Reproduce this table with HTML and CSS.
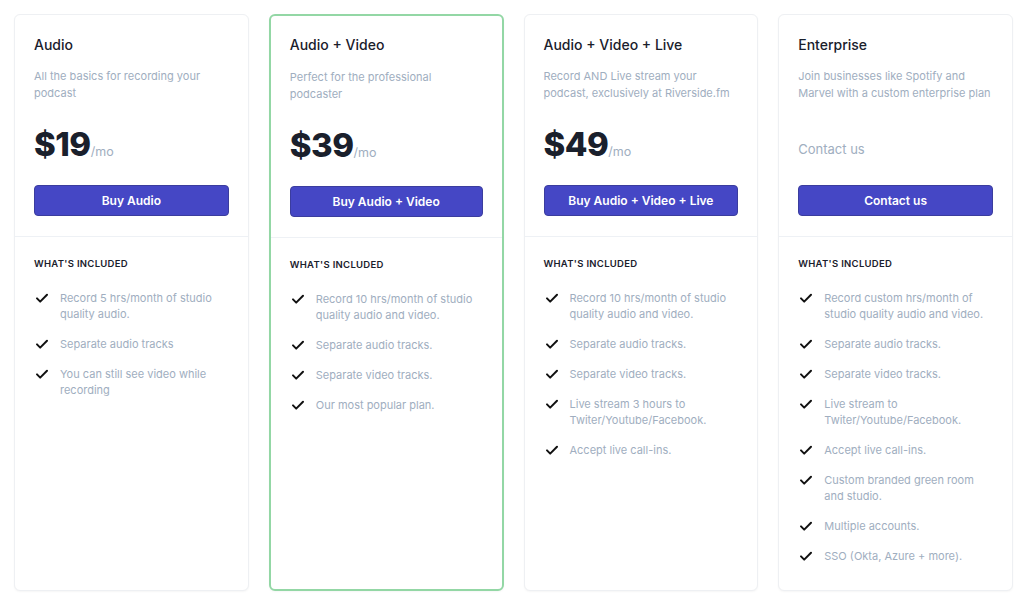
FILE: index.html
```html
<!DOCTYPE html>
<html lang="en">
<head>
    <meta charset="UTF-8">
    <meta name="viewport" content="width=device-width, initial-scale=1.0">
    <title>Pricing</title>
    <link rel="stylesheet" href="styles.css">
</head>
<body>
    <main class="planos">
        <div class="plano">
            <div class="plano-topo">
                <h3>Audio</h3>
                <p class="descricao">All the basics for recording your podcast</p>
                <div class="preco"><span class="valor">$19</span><span class="mes">/mo</span></div>
                <button class="btn-comprar">Buy Audio</button>
            </div>
            <div class="plano-itens">
                <h4>What's included</h4>
                <ul>
                    <li><svg viewBox="0 0 16 16"><path d="M3 8.4l3.2 3.2L13 4.8"/></svg><span>Record 5 hrs/month of studio quality audio.</span></li>
                    <li><svg viewBox="0 0 16 16"><path d="M3 8.4l3.2 3.2L13 4.8"/></svg><span>Separate audio tracks</span></li>
                    <li><svg viewBox="0 0 16 16"><path d="M3 8.4l3.2 3.2L13 4.8"/></svg><span>You can still see video while recording</span></li>
                </ul>
            </div>
        </div>

        <div class="plano destaque">
            <div class="plano-topo">
                <h3>Audio + Video</h3>
                <p class="descricao">Perfect for the professional podcaster</p>
                <div class="preco"><span class="valor">$39</span><span class="mes">/mo</span></div>
                <button class="btn-comprar">Buy Audio + Video</button>
            </div>
            <div class="plano-itens">
                <h4>What's included</h4>
                <ul>
                    <li><svg viewBox="0 0 16 16"><path d="M3 8.4l3.2 3.2L13 4.8"/></svg><span>Record 10 hrs/month of studio quality audio and video.</span></li>
                    <li><svg viewBox="0 0 16 16"><path d="M3 8.4l3.2 3.2L13 4.8"/></svg><span>Separate audio tracks.</span></li>
                    <li><svg viewBox="0 0 16 16"><path d="M3 8.4l3.2 3.2L13 4.8"/></svg><span>Separate video tracks.</span></li>
                    <li><svg viewBox="0 0 16 16"><path d="M3 8.4l3.2 3.2L13 4.8"/></svg><span>Our most popular plan.</span></li>
                </ul>
            </div>
        </div>

        <div class="plano">
            <div class="plano-topo">
                <h3>Audio + Video + Live</h3>
                <p class="descricao">Record AND Live stream your podcast, exclusively at Riverside.fm</p>
                <div class="preco"><span class="valor">$49</span><span class="mes">/mo</span></div>
                <button class="btn-comprar">Buy Audio + Video + Live</button>
            </div>
            <div class="plano-itens">
                <h4>What's included</h4>
                <ul>
                    <li><svg viewBox="0 0 16 16"><path d="M3 8.4l3.2 3.2L13 4.8"/></svg><span>Record 10 hrs/month of studio quality audio and video.</span></li>
                    <li><svg viewBox="0 0 16 16"><path d="M3 8.4l3.2 3.2L13 4.8"/></svg><span>Separate audio tracks.</span></li>
                    <li><svg viewBox="0 0 16 16"><path d="M3 8.4l3.2 3.2L13 4.8"/></svg><span>Separate video tracks.</span></li>
                    <li><svg viewBox="0 0 16 16"><path d="M3 8.4l3.2 3.2L13 4.8"/></svg><span>Live stream 3 hours to Twiter/Youtube/Facebook.</span></li>
                    <li><svg viewBox="0 0 16 16"><path d="M3 8.4l3.2 3.2L13 4.8"/></svg><span>Accept live call-ins.</span></li>
                </ul>
            </div>
        </div>

        <div class="plano">
            <div class="plano-topo">
                <h3>Enterprise</h3>
                <p class="descricao">Join businesses like Spotify and Marvel with a custom enterprise plan</p>
                <div class="preco"><span class="contato">Contact us</span></div>
                <button class="btn-comprar">Contact us</button>
            </div>
            <div class="plano-itens">
                <h4>What's included</h4>
                <ul>
                    <li><svg viewBox="0 0 16 16"><path d="M3 8.4l3.2 3.2L13 4.8"/></svg><span>Record custom hrs/month of studio quality audio and video.</span></li>
                    <li><svg viewBox="0 0 16 16"><path d="M3 8.4l3.2 3.2L13 4.8"/></svg><span>Separate audio tracks.</span></li>
                    <li><svg viewBox="0 0 16 16"><path d="M3 8.4l3.2 3.2L13 4.8"/></svg><span>Separate video tracks.</span></li>
                    <li><svg viewBox="0 0 16 16"><path d="M3 8.4l3.2 3.2L13 4.8"/></svg><span>Live stream to Twiter/Youtube/Facebook.</span></li>
                    <li><svg viewBox="0 0 16 16"><path d="M3 8.4l3.2 3.2L13 4.8"/></svg><span>Accept live call-ins.</span></li>
                    <li><svg viewBox="0 0 16 16"><path d="M3 8.4l3.2 3.2L13 4.8"/></svg><span>Custom branded green room and studio.</span></li>
                    <li><svg viewBox="0 0 16 16"><path d="M3 8.4l3.2 3.2L13 4.8"/></svg><span>Multiple accounts.</span></li>
                    <li><svg viewBox="0 0 16 16"><path d="M3 8.4l3.2 3.2L13 4.8"/></svg><span>SSO (Okta, Azure + more).</span></li>
                </ul>
            </div>
        </div>
    </main>
</body>
</html>
```

FILE: styles.css
```css
body {
    font-family: Inter, "Noto Sans", Arial, sans-serif;
    margin: 0;
    padding: 0;
    background-color: #fff;
    color: #1a202c;
}

.planos {
    display: grid;
    grid-template-columns: repeat(4, 1fr);
    gap: 20px;
    padding: 14px 11px 10px 14px;
}

.plano {
    background: white;
    border: 1px solid #eef0f3;
    border-radius: 6px;
    box-shadow: 0 1px 2px rgba(0, 0, 0, 0.04);
}

.plano.destaque {
    border: 2px solid #93d7a5;
}

.plano.destaque .plano-topo {
    padding-top: 19px;
}

.plano-topo {
    padding: 20px 19px 20px 19px;
    border-bottom: 1px solid #eef1f5;
}

.plano-topo h3 {
    margin: 0;
    font-size: 14px;
    line-height: 20px;
    font-weight: 500;
    color: #1a202c;
}

.descricao {
    margin: 13px 0 0;
    font-size: 11px;
    line-height: 17px;
    color: #a0aec0;
    min-height: 34px;
}

.destaque .descricao {
    margin-top: 14px;
}

.preco {
    margin-top: 22px;
    height: 40px;
    display: flex;
    align-items: baseline;
}

.valor {
    font-size: 33px;
    line-height: 40px;
    font-weight: 800;
    letter-spacing: -0.5px;
    color: #1a202c;
}

.mes {
    font-size: 12.5px;
    color: #a0aec0;
}

.contato {
    font-size: 13px;
    line-height: 20px;
    padding-top: 15px;
    color: #a0aec0;
}

.btn-comprar {
    display: block;
    width: 100%;
    margin-top: 21px;
    height: 31px;
    background-color: #4547c5;
    color: white;
    border: 1px solid #3b3d9e;
    border-radius: 4px;
    font-family: inherit;
    font-size: 12px;
    font-weight: 600;
    cursor: pointer;
}

.plano-itens {
    padding: 20px 19px 26px 19px;
}

.plano-itens h4 {
    margin: 0;
    font-size: 9.5px;
    line-height: 14px;
    font-weight: 600;
    letter-spacing: 0.3px;
    text-transform: uppercase;
    color: #1a202c;
}

.plano-itens ul {
    list-style: none;
    margin: 19px 0 0;
    padding: 0;
    display: flex;
    flex-direction: column;
    gap: 14px;
}

.plano-itens li {
    display: flex;
    align-items: flex-start;
    font-size: 11px;
    line-height: 16px;
    color: #a0aec0;
}

.plano-itens li svg {
    flex: none;
    width: 16px;
    height: 16px;
    margin-right: 10px;
    fill: none;
    stroke: #111;
    stroke-width: 2;
    stroke-linecap: round;
    stroke-linejoin: round;
}
```
